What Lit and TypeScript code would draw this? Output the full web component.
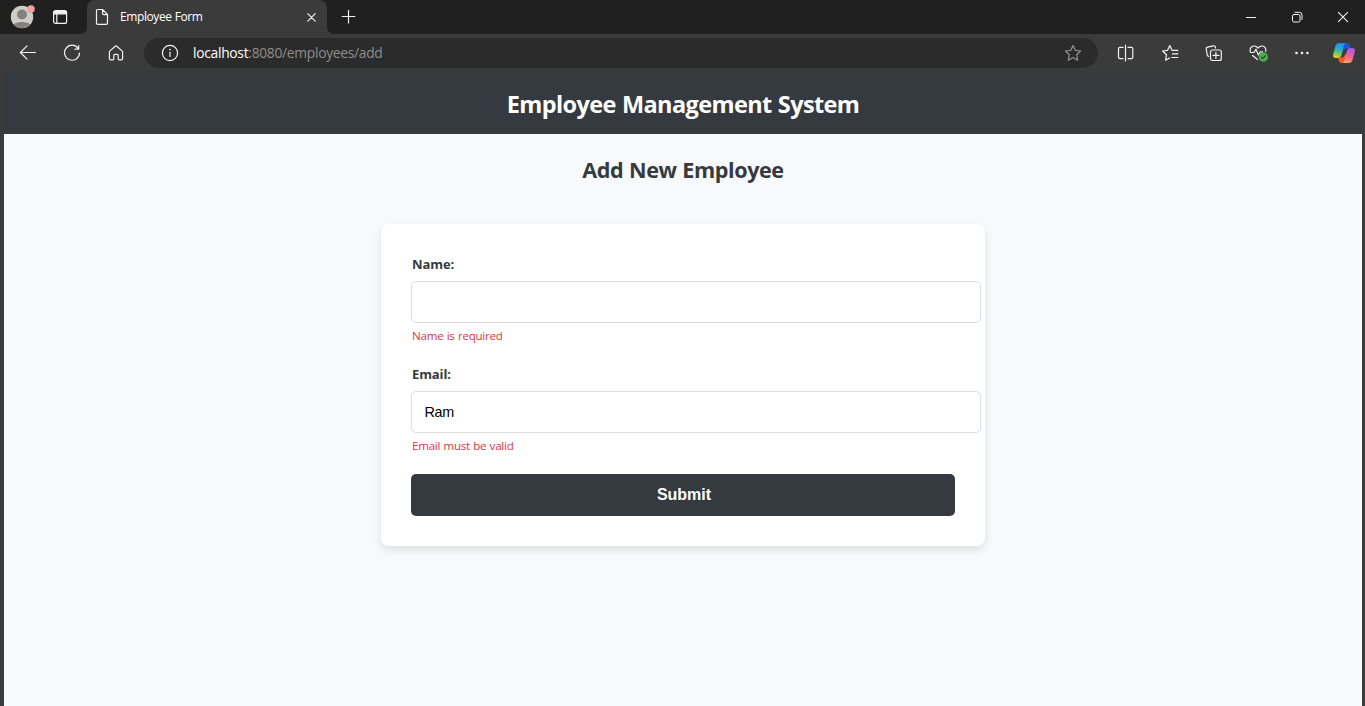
import { LitElement, html, css, svg } from "lit";
import { customElement, property } from "lit/decorators.js";

const ico = (w: number, h: number, body: unknown) =>
  html`<svg width=${w} height=${h} viewBox="0 0 ${w} ${h}" fill="none" stroke="#f2f2f2" stroke-width="1.2" stroke-linecap="round" stroke-linejoin="round">${body}</svg>`;

@customElement("browser-chrome")
class BrowserChrome extends LitElement {
  static styles = css`
    :host { display: block; font-family: "Open Sans", "Noto Sans", sans-serif; color: #fff; background: #3b3b3b; height: 70px; }
    svg { display: block; flex: none; }
    .tabs { display: flex; height: 34px; background: #3b3b3b; }
    .left { width: 87px; box-sizing: border-box; background: #202020; border-bottom-right-radius: 7px; display: flex; align-items: center; padding-left: 10px; gap: 16px; }
    .tabwrap { background: #202020; width: 240px; }
    .tab { height: 34px; box-sizing: border-box; background: #3b3b3b; border-radius: 8px 8px 0 0; display: flex; align-items: center; padding: 0 10px 0 8px; }
    .title { font-size: 12px; letter-spacing: -0.4px; word-spacing: 0.3px; margin-left: 10px; flex: 1; white-space: nowrap; line-height: 16px; }
    .right { flex: 1; background: #202020; border-bottom-left-radius: 7px; display: flex; align-items: center; padding: 0 16px 0 14px; }
    .grow { flex: 1; }
    .win { display: flex; gap: 34px; }
    .bar { display: flex; align-items: center; height: 36px; padding: 1px 0 0 18px; }
    .nav { display: flex; flex: none; gap: 24px; width: 126px; }
    .url { display: flex; flex: none; align-items: center; width: 954px; height: 30px; box-sizing: border-box; border-radius: 15px; background: #2b2b2b; padding: 0 15px 0 16px; }
    .addr { flex: 1; margin-left: 13px; font-size: 13.8px; line-height: 20px; color: #8e8e8e; letter-spacing: -0.28px; white-space: nowrap; }
    .addr b { font-weight: 400; color: #fff; }
    .tools { display: flex; flex: none; align-items: center; gap: 24px; margin-left: 18px; }
    .copilot { margin-left: -2px; }
  `;
  render() {
    return html`
      <div class="tabs">
        <div class="left">
          <svg width="25" height="26" viewBox="0 0 25 26"><circle cx="12" cy="13" r="11.2" fill="#cfcdca"/><circle cx="12" cy="10.5" r="5" fill="#85817d"/><path d="M4 20.7C5 17 19 17 20 20.7A11 11 0 0 1 4 20.7Z" fill="#85817d"/><circle cx="21" cy="5" r="3.8" fill="#f4a09a"/></svg>
          ${ico(18, 16, svg`<rect x="2.6" y="1.6" width="13" height="12.8" rx="2"/><path d="M3 2.5h12.4v2.3H3z" fill="#f2f2f2"/><path d="M5.8 5v9"/>`)}
        </div>
        <div class="tabwrap"><div class="tab">
          ${ico(15, 18, svg`<path d="M1.5 2.8Q1.5 1.5 2.8 1.5H7.5L12.5 6.5V15Q12.5 16.4 11.2 16.4H2.8Q1.5 16.4 1.5 15ZM7.5 1.8V5.2Q7.5 6.6 8.9 6.6H12.2"/>`)}
          <span class="title">Employee Form</span>
          ${ico(11, 10, svg`<path d="M1.8 1.7l7.4 7.4M9.2 1.7l-7.4 7.4"/>`)}
        </div></div>
        <div class="right">
          ${ico(15, 16, svg`<path d="M7.5 1v13.6M.7 7.5h13.6" stroke-linecap="butt"/>`)}
          <div class="grow"></div>
          <div class="win">
            ${ico(12, 12, svg`<path d="M1 6.5h10" stroke-width="1" stroke-linecap="butt"/>`)}
            ${ico(12, 12, svg`<rect x="1.5" y="3.5" width="7.5" height="7.5" rx="1.5" stroke-width="1"/><path d="M4 1.3h4.5Q11 1.3 11 4v4.5" stroke-width="1"/>`)}
            ${ico(12, 12, svg`<path d="M1.4 1.4l9.2 9.2M10.6 1.4l-9.2 9.2" stroke-width="1.1"/>`)}
          </div>
        </div>
      </div>
      <div class="bar">
        <div class="nav">
          ${ico(20, 20, svg`<path d="M17.5 9.5H2.6M9 2.9L2.4 9.5L9 16.1"/>`)}
          ${ico(20, 20, svg`<path d="M16 5.2A7.5 7.5 0 1 0 17.5 10M16.7 2.7V6.2H13"/>`)}
          ${ico(20, 20, svg`<path d="M3.4 9.2Q3.4 8.4 4 7.9L9.2 3.2Q10 2.5 10.8 3.2L16 7.9Q16.6 8.4 16.6 9.2V15.4Q16.6 16.8 15.4 16.8H13Q12.2 16.8 12.2 16V12.5Q12.2 11.4 11.2 11.4H8.8Q7.8 11.4 7.8 12.5V16Q7.8 16.8 7 16.8H4.6Q3.4 16.8 3.4 15.4Z"/>`)}
        </div>
        <div class="url">
          ${ico(20, 20, svg`<circle cx="10" cy="10" r="7.6"/><path d="M10 9v4.5"/><circle cx="10" cy="6.6" r=".5" fill="#f2f2f2" stroke-width=".7"/>`)}
          <span class="addr"><b>localhost</b>:8080/employees/add</span>
          <svg width="20" height="20" viewBox="0 0 20 20" fill="none" stroke="#929292" stroke-width="1.2" stroke-linejoin="round"><path d="M10 2.5L12.2 7.3L17.6 8L13.7 11.7L14.6 17.2L10 14.6L5.4 17.2L6.3 11.7L2.4 8L7.8 7.3Z"/></svg>
        </div>
        <div class="tools">
          ${ico(20, 20, svg`<path d="M7 4.4H4.1Q2.5 4.4 2.5 6v8Q2.5 15.6 4.1 15.6H7M12 4.4h3.4Q16.8 4.4 16.8 6v8Q16.8 15.6 15.4 15.6H12M9.5 2v16"/>`)}
          ${ico(20, 20, svg`<path d="M9.5 15L5.6 17.2L6.5 11.7L2.6 8L7.6 7.3L9.8 2.6L12 7.3H17.8M12.4 10.9H17.8M11.8 14.5H17.8"/>`)}
          ${ico(20, 20, svg`<path d="M4.7 13.3Q3.4 13 3.2 11.8L2.2 6Q2 4.5 3.5 4.2L9.5 2.8Q11 2.5 11.4 4L11.5 5"/><rect x="6.5" y="7" width="10.8" height="10.5" rx="2"/><path d="M11.9 9.3v6M9 12.3h6"/>`)}
          ${ico(22, 20, svg`<path d="M2.2 8.5C1.6 2.8 7 1.5 10 5C13 1.5 18.4 2.8 17.8 8.3M4.5 12.5L9.5 16.5M2.4 9.5H6L8 6.2L10.3 12L12.3 8.8H14.5"/><circle cx="15.3" cy="14" r="4.7" fill="#4caf50" stroke="none"/><path d="M13.2 14.2l1.5 1.5 2.9-3" stroke="#24462a"/>`)}
          <svg width="16" height="20" viewBox="0 0 16 20" fill="#f2f2f2"><circle cx="2.5" cy="10" r="1.3"/><circle cx="8" cy="10" r="1.3"/><circle cx="13.4" cy="10" r="1.3"/></svg>
          <svg class="copilot" width="24" height="24" viewBox="0 0 24 24">
            <defs>
              <linearGradient id="a" gradientUnits="userSpaceOnUse" x1="9" y1="2" x2="5" y2="17"><stop offset="0" stop-color="#1e90ee"/><stop offset=".35" stop-color="#22a8d8"/><stop offset=".65" stop-color="#5cc078"/><stop offset="1" stop-color="#f4d01c"/></linearGradient>
              <linearGradient id="b" gradientUnits="userSpaceOnUse" x1="19" y1="7" x2="14" y2="22"><stop offset="0" stop-color="#a65cf0"/><stop offset=".5" stop-color="#ee5d9c"/><stop offset="1" stop-color="#ffa45c"/></linearGradient>
            </defs>
            <path d="M10 2H15Q17 2 17.7 4.2L18.5 7.5H14.5Q12.5 7.5 11 12Z" fill="#1a55dc"/>
            <path d="M6 16.5H10Q12 16.5 13.5 12L14 21Q12.5 22 10.5 22H9Q7.6 22 7 20Z" fill="#f25a30"/>
            <path d="M7.5 2H14Q12.3 2.5 11.7 5L9.7 13.5Q8.7 17 5.5 17H4Q.3 17 1.3 12.8L3.5 5Q4.4 2 7.5 2Z" fill="url(#a)"/>
            <path d="M16.5 22H10.5Q12 21.5 12.6 19L14.6 10.5Q15.6 7 18.5 7H20Q23.8 7 22.7 11.2L20.5 19Q19.6 22 16.5 22Z" fill="url(#b)"/>
          </svg>
        </div>
      </div>`;
  }
}

@customElement("form-field")
class FormField extends LitElement {
  @property() label = "";
  @property() value = "";
  @property() error = "";
  static styles = css`
    :host { display: block; height: 110px; }
    label { display: block; height: 20px; line-height: 21px; font-size: 13px; font-weight: 700; letter-spacing: -0.1px; margin-bottom: 7px; padding-left: 1px; }
    input { display: block; width: 570px; height: 42px; box-sizing: border-box; border: 1px solid #dcdcdc; border-radius: 5px; padding: 0 12.5px; font: 14.4px "Liberation Sans", Arial, sans-serif; letter-spacing: -0.3px; color: #000; background: #fff; outline: none; }
    .error { margin-top: 4px; padding-left: 1px; height: 18px; line-height: 17px; font-size: 11.6px; letter-spacing: -0.25px; word-spacing: 0.5px; color: #dc3545; white-space: nowrap; }
  `;
  render() {
    return html`<label>${this.label}</label><input type="text" .value=${this.value} /><div class="error">${this.error}</div>`;
  }
}

@customElement("app-root")
class AppRoot extends LitElement {
  static styles = css`
    :host { display: block; height: 706px; overflow: hidden; background: #3b3b3b; font-family: "Open Sans", "Noto Sans", sans-serif; color: #343a40; }
    .page { margin: 0 3px 0 4px; }
    header { height: 63px; margin-top: 1px; background: #343a40; color: #fff; text-align: center; border-radius: 8px 8px 0 0; }
    main { height: 572px; overflow: hidden; background: #f8f9fa; }
    h1 { margin: 0; font-size: 23.5px; line-height: 66px; font-weight: 700; letter-spacing: -0.6px; word-spacing: 0.6px; }
    h2 { margin: 0; text-align: center; font-size: 21.6px; font-weight: 700; line-height: 32px; padding: 20px 0 0; letter-spacing: -0.42px; word-spacing: 0.6px; }
    .card { margin: 38px auto 0; width: 604px; height: 322px; box-sizing: border-box; padding: 30px; background: #fff; border-radius: 8px; box-shadow: 0 4px 8px rgba(0,0,0,.1); }
    button { display: block; width: 544px; height: 42px; border: 0; border-radius: 5px; background: #343a40; color: #fff; font: 700 16px "Liberation Sans", Arial, sans-serif; padding: 0 0 0 2px; }
  `;
  render() {
    return html`
      <browser-chrome></browser-chrome>
      <div class="page">
        <header><h1>Employee Management System</h1></header>
        <main>
          <h2>Add New Employee</h2>
          <div class="card">
            <form-field label="Name:" error="Name is required"></form-field>
            <form-field label="Email:" value="Ram" error="Email must be valid"></form-field>
            <button type="button">Submit</button>
          </div>
        </main>
      </div>`;
  }
}
